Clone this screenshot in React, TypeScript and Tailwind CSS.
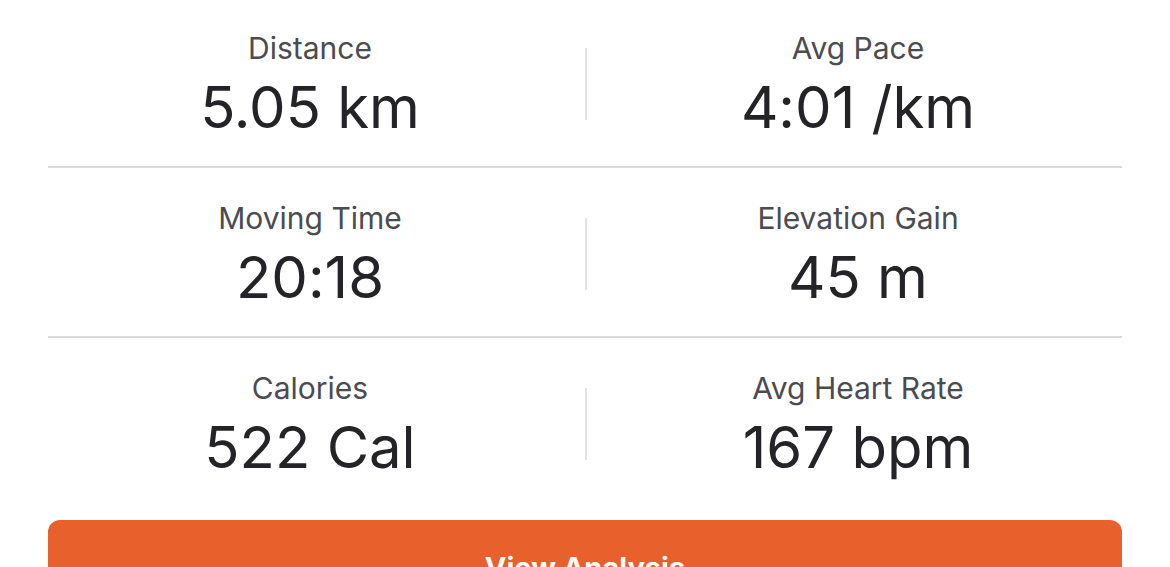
import React from "react";

const stats: [string, string][][] = [
  [
    ["Distance", "5.05 km"],
    ["Avg Pace", "4:01 /km"],
  ],
  [
    ["Moving Time", "20:18"],
    ["Elevation Gain", "45 m"],
  ],
  [
    ["Calories", "522 Cal"],
    ["Avg Heart Rate", "167 bpm"],
  ],
];

function Cell({ label, value, w }: { label: string; value: string; w: string }) {
  return (
    <div className={`${w} flex flex-col items-center`}>
      <div className="text-[30px] leading-[36px] text-[#4b4b50] whitespace-nowrap">{label}</div>
      <div className="text-[58px] leading-[66px] text-[#242428] mt-[8px] whitespace-nowrap [font-feature-settings:'calt'_0]">
        {value}
      </div>
    </div>
  );
}

export default function App() {
  return (
    <div
      className="w-[1170px] h-[567px] bg-white overflow-hidden"
      style={{ fontFamily: "Inter, 'Noto Sans', sans-serif" }}
    >
      {stats.map((row, i) => (
        <div key={i}>
          <div className={`flex pl-[35px] pb-[26px] ${i === 0 ? "pt-[30px]" : "pt-[32px]"}`}>
            <Cell w="w-[550px]" label={row[0][0]} value={row[0][1]} />
            <div className="w-[2px] h-[72px] bg-[#e2e2e4] mt-[18px]" />
            <Cell w="w-[542px]" label={row[1][0]} value={row[1][1]} />
          </div>
          {i < 2 && <div className="mx-[48px] h-[2px] bg-[#d8d8dd]" />}
        </div>
      ))}
      <div className="mx-[48px] mt-[14px] h-[100px] rounded-[12px] bg-[#e8602c] flex justify-center pt-[28px]">
        <span className="text-white text-[29px] leading-[40px] font-bold">View Analysis</span>
      </div>
    </div>
  );
}
